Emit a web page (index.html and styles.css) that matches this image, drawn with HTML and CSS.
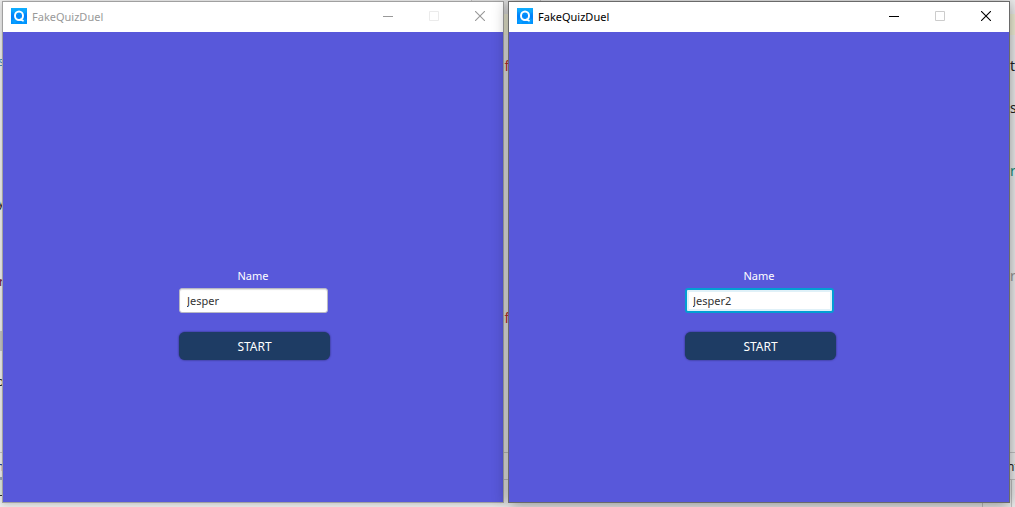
FILE: index.html
```
<!DOCTYPE html>
<html lang="en">
<head>
<meta charset="utf-8">
<title>FakeQuizDuel</title>
<link rel="stylesheet" href="styles.css">
</head>
<body>
<svg class="defs" width="0" height="0" aria-hidden="true">
  <defs>
    <linearGradient id="sky" x1="0" y1="0" x2="0" y2="1">
      <stop offset="0" stop-color="#10b0ff"/>
      <stop offset="0.5" stop-color="#0080fa"/>
      <stop offset="1" stop-color="#0096ff"/>
    </linearGradient>
    <symbol id="logo" viewBox="0 0 16 16">
      <rect width="16" height="16" fill="url(#sky)"/>
      <path d="M0 3L8 8L3 0ZM13 0L8 8L16 4ZM0 13L8 8L4 16ZM12 16L8 8L16 12Z" fill="#14b4ff" opacity=".4"/>
      <ellipse cx="8" cy="7.7" rx="4" ry="4.3" fill="none" stroke="#fff" stroke-width="2"/>
      <path d="M9 11.4L12.6 13" fill="none" stroke="#fff" stroke-width="1.8"/>
    </symbol>
    <symbol id="min" viewBox="0 0 10 10"><path d="M0 5.5H10" stroke="currentColor"/></symbol>
    <symbol id="max" viewBox="0 0 10 10"><path d="M.5 .5H9.5V9.5H.5Z" fill="none" stroke="currentColor"/></symbol>
    <symbol id="close" viewBox="0 0 10 10"><path d="M0 0L10 10M10 0L0 10" fill="none" stroke="currentColor" stroke-width="1.1"/></symbol>
  </defs>
</svg>
<div class="desktop">
  <div class="backdrop" aria-hidden="true">
    <i class="toolbar"></i>
    <i class="highlight"></i>
    <i class="scroll"></i>
    <i class="rule rule-a"></i>
    <i class="rule rule-b"></i>
    <i class="tab tab-a"></i>
    <i class="tab tab-b"></i>
    <i class="panel"></i>
    <span class="scrap left s1">s</span>
    <span class="scrap left s2">y</span>
    <span class="scrap left s3">r</span>
    <span class="scrap left s4">o</span>
    <span class="scrap left s5">n</span>
    <span class="scrap mid m1"><b>o</b>f</span>
    <span class="scrap mid m2"><b>o</b>f</span>
    <span class="scrap right r1">t</span>
    <span class="scrap right r2">s</span>
    <span class="scrap right r3">r</span>
    <span class="scrap right r4">r</span>
    <span class="scrap right r5">nt</span>
  </div>
  <section class="window inactive">
    <header class="titlebar">
      <svg class="logo"><use href="#logo"/></svg>
      <h1 class="title">FakeQuizDuel</h1>
      <button class="control" type="button" aria-label="Minimize"><svg><use href="#min"/></svg></button>
      <button class="control" type="button" aria-label="Maximize" disabled><svg><use href="#max"/></svg></button>
      <button class="control" type="button" aria-label="Close"><svg><use href="#close"/></svg></button>
    </header>
    <form class="content">
      <div class="fields">
        <label class="label" for="name1">Name</label>
        <input class="input" id="name1" type="text" value="Jesper">
        <button class="start" type="button">START</button>
      </div>
    </form>
  </section>
  <section class="window active">
    <header class="titlebar">
      <svg class="logo"><use href="#logo"/></svg>
      <h1 class="title">FakeQuizDuel</h1>
      <button class="control" type="button" aria-label="Minimize"><svg><use href="#min"/></svg></button>
      <button class="control" type="button" aria-label="Maximize" disabled><svg><use href="#max"/></svg></button>
      <button class="control" type="button" aria-label="Close"><svg><use href="#close"/></svg></button>
    </header>
    <form class="content">
      <div class="fields">
        <label class="label" for="name2">Name</label>
        <input class="input focused" id="name2" type="text" value="Jesper2">
        <button class="start" type="button">START</button>
      </div>
    </form>
  </section>
</div>
</body>
</html>
```
FILE: styles.css
```
* { box-sizing: border-box; }

body {
  margin: 0;
  font-family: "Noto Sans", "Open Sans", sans-serif;
  font-size: 11px;
  line-height: 16px;
}

.defs { position: absolute; }

.desktop {
  position: relative;
  display: grid;
  grid-template-columns: 1fr 1fr;
  gap: 4px;
  min-height: 100vh;
  padding: 1px 5px 4px 2px;
  overflow: hidden;
  background: #eeeeee;
}

/* Editor window showing through around the two dialogs */
.backdrop { position: absolute; inset: 0; font-size: 12px; }
.backdrop i { position: absolute; }
.toolbar { left: 471px; top: 0; width: 70px; height: 15px; background: #e4e4e4; border: solid #c4c4c4; border-width: 0 1px; }
.highlight { left: 503px; right: 0; top: 14px; height: 21px; background: #f2f1d8; }
.scroll { left: 0; top: 331px; width: 3px; height: 20px; background: #c4c4c4; }
.rule { left: 0; right: 0; height: 1px; background: #c4c4c4; }
.rule-a { top: 452px; }
.rule-b { top: 479px; }
.tab { left: 0; width: 3px; }
.tab-a { top: 477px; height: 3px; background: #9aa5b8; }
.tab-b { top: 480px; height: 16px; background: #dfeadf; border-bottom: 1px solid #333333; }
.panel { left: 982px; top: 480px; width: 30px; height: 27px; border: solid #c4c4c4; border-width: 0 1px; }

.scrap { position: absolute; color: #222222; white-space: nowrap; }
.left { right: calc(100% - 4px); }
.mid { left: 496px; color: #c03030; font-size: 14px; }
.mid b { color: #5a9a3a; font-weight: 400; }
.right { left: 1010px; font-size: 14px; }
.s1 { top: 54px; color: #4a90c0; }
.s2 { top: 195px; }
.s3 { top: 274px; color: #660e3a; }
.s4 { top: 374px; }
.s5 { top: 459px; color: #20409a; }
.m1 { top: 58px; }
.m2 { top: 310px; }
.r1 { top: 58px; }
.r2 { top: 100px; }
.r3 { top: 163px; color: #159080; }
.r4 { top: 268px; color: #999999; }
.r5 { top: 459px; left: 1007px; font-size: 12px; }

.window {
  position: relative;
  display: flex;
  flex-direction: column;
  border: 1px solid #6a6a6a;
}
.inactive { border-color: #a0a0a0; box-shadow: 0 1px 7px rgba(0, 0, 0, .22); }
.active { box-shadow: 0 2px 14px rgba(0, 0, 0, .42); }

.titlebar {
  display: flex;
  align-items: center;
  height: 30px;
  padding-left: 8px;
  background: #ffffff;
  color: #000000;
}
.inactive .titlebar { color: #999999; }
.logo { width: 16px; height: 16px; margin-top: -2px; }
.title { flex: 1; margin: 0 0 0 5px; font-size: 11px; font-weight: 400; }
.control {
  display: flex;
  align-items: center;
  justify-content: center;
  width: 46px;
  height: 28px;
  margin-bottom: 2px;
  padding: 0;
  border: 0;
  background: none;
  color: inherit;
}
.control svg { width: 10px; height: 10px; overflow: visible; }
.control:disabled { color: #cccccc; }
.inactive .control:disabled { color: #ebebeb; }

.content {
  flex: 1;
  display: flex;
  justify-content: center;
  align-items: flex-start;
  padding-top: 236px;
  background: #5858da;
}
.fields { display: flex; flex-direction: column; width: 148px; }
.label { margin-bottom: 4px; color: #ffffff; text-align: center; }
.input {
  width: 149px;
  height: 25px;
  padding: 0 7px;
  border: 1px solid #b8b8c4;
  border-radius: 3px;
  outline: 0;
  background: #ffffff;
  color: #333333;
  font: inherit;
  box-shadow: inset 0 1px 1px #e0e0e0;
}
.focused {
  padding: 0 6px;
  border: 2px solid #039ed3;
  box-shadow: inset 0 0 0 2px #e0f1f8;
}
.start {
  width: 151px;
  height: 28px;
  margin: 19px 0 0;
  padding: 1px 0 0;
  border: 0;
  border-radius: 6px;
  background: #1e3c64;
  color: #ffffff;
  font: inherit;
  font-size: 12px;
  box-shadow: 0 0 2px rgba(20, 20, 60, .8);
}
```
